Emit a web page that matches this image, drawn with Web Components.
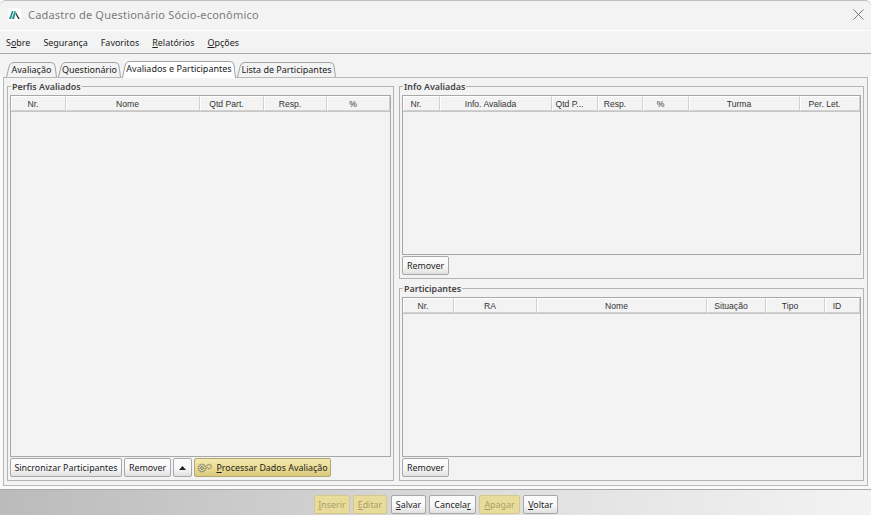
<!DOCTYPE html>
<html lang="pt">
<head>
<meta charset="utf-8">
<title>Cadastro de Questionário Sócio-econômico</title>
<style>
  html, body { margin: 0; height: 100%; overflow: hidden; background: #fafafa; }
  body { font-family: "Noto Sans", "Liberation Sans", sans-serif; color: #222; display: flex; flex-direction: column; }
  u { text-underline-offset: 1px; }
</style>
</head>
<body>
  <title-bar text="Cadastro de Questionário Sócio-econômico"></title-bar>
  <menu-bar>
    <menu-item><span>S<u>o</u>bre</span></menu-item>
    <menu-item>Segurança</menu-item>
    <menu-item>Favoritos</menu-item>
    <menu-item><span><u>R</u>elatórios</span></menu-item>
    <menu-item><span><u>O</u>pções</span></menu-item>
  </menu-bar>
  <tab-strip>
    <tab-item w="51">Avaliação</tab-item>
    <tab-item w="63">Questionário</tab-item>
    <tab-item active w="114">Avaliados e Participantes</tab-item>
    <tab-item w="99">Lista de Participantes</tab-item>
  </tab-strip>
  <main-panel>
    <group-box slot="left" label="Perfis Avaliados" style="flex:1">
      <data-table columns="55:Nr.,134:Nome,64:Qtd Part.,63:Resp.,63:%"></data-table>
      <button-row slot="actions">
        <ui-button style="width:112px">Sincronizar Participantes</ui-button>
        <ui-button style="width:47px">Remover</ui-button>
        <ui-button style="width:19px"><svg width="7" height="4" viewBox="0 0 7 4"><path d="M3.5 0 7 4H0z" fill="#222"/></svg></ui-button>
        <ui-button accent style="width:137px">
          <svg width="16" height="10" viewBox="0 0 16 10" style="margin-right:3px"><g fill="none" stroke="#7d7d70"><circle cx="5" cy="5" r="3.6" stroke-width="1.6" stroke-dasharray="1.2 .8"/><circle cx="5" cy="5" r="1.4"/><circle cx="12" cy="3.5" r="2.2" stroke-width="1.2" stroke-dasharray="1 .6"/></g></svg>
          <span><u>P</u>rocessar Dados Avaliação</span>
        </ui-button>
      </button-row>
    </group-box>
    <div slot="right" style="display:flex;flex-direction:column;gap:4px;height:100%">
      <group-box label="Info Avaliadas" style="height:198px">
        <data-table columns="37:Nr.,112:Info. Avaliada,46:Qtd P...,45:Resp.,46:%,111:Turma,60:Per. Let."></data-table>
        <button-row slot="actions"><ui-button style="width:47px">Remover</ui-button></button-row>
      </group-box>
      <group-box label="Participantes" style="flex:1">
        <data-table columns="51:Nr.,83:RA,170:Nome,59:Situação,59:Tipo,35:ID"></data-table>
        <button-row slot="actions"><ui-button style="width:47px">Remover</ui-button></button-row>
      </group-box>
    </div>
  </main-panel>
  <foot-bar>
    <ui-button disabled style="width:36px"><span><u>I</u>nserir</span></ui-button>
    <ui-button disabled style="width:34px;margin-left:3px"><span><u>E</u>ditar</span></ui-button>
    <ui-button style="width:35px;margin-left:4px"><span><u>S</u>alvar</span></ui-button>
    <ui-button style="width:47px;margin-left:3px"><span>Cancela<u>r</u></span></ui-button>
    <ui-button disabled style="width:41px;margin-left:3px"><span><u>A</u>pagar</span></ui-button>
    <ui-button style="width:35px;margin-left:3px"><span><u>V</u>oltar</span></ui-button>
  </foot-bar>

<script>
function shadow(el, html) {
  el.attachShadow({ mode: "open" }).innerHTML = html;
}

class TitleBar extends HTMLElement {
  connectedCallback() {
    shadow(this, `
      <style>
        :host { display: flex; align-items: center; height: 31px; padding: 0 0 2px 8px; box-sizing: border-box; background: #f3f3f3;
                border-top: 1px solid #bdbdbd; border-bottom: 1px solid #fff; border-radius: 6px 6px 0 0; flex: none; }
        .logo { width: 13px; height: 13px; background: #fff; flex: none; }
        span { margin-left: 7px; font-size: 11px; color: #7b7b7b; letter-spacing: .2px; flex: 1; }
        .close { margin-right: 7px; }
      </style>
      <svg class="logo" viewBox="0 0 13 13"><path d="M1 11 4 3h1.6L3 11zM3.8 11l2.8-8h1.2l-1.6 8z" fill="#1b8f8a"/><path d="M8 4.5 11.8 11h-1.5L7.4 6z" fill="#333"/></svg>
      <span>${this.getAttribute("text")}</span>
      <svg class="close" width="11" height="11" viewBox="0 0 11 11"><path d="M.5.5l10 10M10.5.5l-10 10" stroke="#777" fill="none"/></svg>`);
  }
}

class MenuBar extends HTMLElement {
  connectedCallback() {
    shadow(this, `
      <style>
        :host { display: flex; gap: 13px; align-items: center; height: 23px; padding: 0 0 0 6px; box-sizing: border-box; background: #f3f3f3;
                border-bottom: 1px solid #a9a9a9; flex: none; }
      </style>
      <slot></slot>`);
  }
}

class MenuItem extends HTMLElement {
  connectedCallback() {
    shadow(this, `
      <style>:host { display: block; font-size: 8.95px; color: #222; white-space: nowrap; }</style>
      <slot></slot>`);
  }
}

class TabStrip extends HTMLElement {
  connectedCallback() {
    shadow(this, `
      <style>
        :host { display: flex; align-items: flex-end; height: 23px; padding-left: 6px; box-sizing: border-box; flex: none; background: #f3f3f3; position: relative; z-index: 1; }
      </style>
      <slot></slot>`);
  }
}

class TabItem extends HTMLElement {
  connectedCallback() {
    const active = this.hasAttribute("active");
    const w = Number(this.getAttribute("w"));
    const h = active ? 17 : 15;
    const edge = `M.5 ${h}L3 5Q4 .5 8 .5L${w - 6} .5Q${w - 2.5} .5 ${w - 2} 4L${w - .5} ${h}`;
    shadow(this, `
      <style>
        :host { display: flex; align-items: center; justify-content: center; position: relative; width: ${w}px; height: ${h}px; margin-right: 1px;
                padding: 0 0 ${active ? 2 : 0}px 0; box-sizing: border-box; flex: none; margin-bottom: ${active ? -1 : 0}px;
                font-size: 9px; color: #222; white-space: nowrap; }
        svg { position: absolute; left: 0; top: 0; }
        span { position: relative; }
      </style>
      <svg width="${w}" height="${h}" viewBox="0 0 ${w} ${h}"><path d="${edge}" fill="${active ? "#fff" : "#f3f3f3"}" stroke="#a3a3a3"/></svg>
      <span><slot></slot></span>`);
  }
}

class MainPanel extends HTMLElement {
  connectedCallback() {
    shadow(this, `
      <style>
        :host { display: flex; gap: 5px; height: 409px; margin: 0 3px 0 3px; padding: 3px 3px 4px 3px; box-sizing: border-box; flex: none;
                border: 1px solid #b8b8b8; background: #f3f3f3; }
        .left { width: 387px; flex: none; display: flex; }
        .right { flex: 1; min-width: 0; }
      </style>
      <div class="left"><slot name="left"></slot></div>
      <div class="right"><slot name="right"></slot></div>`);
  }
}

class GroupBox extends HTMLElement {
  connectedCallback() {
    shadow(this, `
      <style>
        :host { display: flex; min-width: 0; box-sizing: border-box; }
        fieldset { flex: 1; min-width: 0; margin: 0; padding: 2px 2px 3px; border: 1px solid #b4b4b4; display: flex; flex-direction: column; box-sizing: border-box; }
        legend { padding: 0 1px; margin-left: 1px; font-size: 8.9px; font-weight: 600; color: #444; line-height: 11px; }
        .body { flex: 1; min-height: 0; display: flex; }
        .body ::slotted(*) { flex: 1; }
      </style>
      <fieldset>
        <legend>${this.getAttribute("label")}</legend>
        <div class="body"><slot></slot></div>
        <slot name="actions"></slot>
      </fieldset>`);
  }
}

class DataTable extends HTMLElement {
  connectedCallback() {
    const cols = this.getAttribute("columns").split(",").map(c => c.split(":"));
    const cells = cols.map(c => `<div class="th" style="width:${c[0]}px">${c[1]}</div>`).join("");
    shadow(this, `
      <style>
        :host { display: block; min-width: 0; box-sizing: border-box; border: 1px solid #a8a8a8; background: #f3f3f3; margin-top: 1px; }
        .head { display: flex; height: 15px; border-bottom: 1px solid #c6c6c6; }
        .th { box-sizing: border-box; flex: none; display: flex; align-items: center; justify-content: center; padding-right: 11px;
              border: 1px solid #d0d0d0; border-left-color: #fff; border-top-color: #fff;
              font: 8.6px "Liberation Sans", sans-serif; color: #333; white-space: nowrap; }
      </style>
      <div class="head">${cells}</div>`);
  }
}

class ButtonRow extends HTMLElement {
  connectedCallback() {
    shadow(this, `
      <style>:host { display: flex; gap: 2px; height: 19px; margin-top: 1px; flex: none; }</style>
      <slot></slot>`);
  }
}

class UiButton extends HTMLElement {
  connectedCallback() {
    shadow(this, `
      <style>
        :host { display: inline-flex; align-items: center; justify-content: center; box-sizing: border-box; height: 19px; flex: none;
                border: 1px solid #a8a8a8; border-radius: 2px; background: linear-gradient(#fbfbfb, #f8f8f8 55%, #e0e0e0);
                font-size: 8.9px; color: #222; white-space: nowrap; }
        :host([accent]) { background: linear-gradient(#f3e8ae, #e9da90 60%, #d9c87c); border-color: #b3a773; }
        :host([disabled]) { background: #e9dc9a; border-color: #d3c98a; color: #a89e6c; }
      </style>
      <slot></slot>`);
  }
}

class FootBar extends HTMLElement {
  connectedCallback() {
    shadow(this, `
      <style>
        :host { display: flex; align-items: flex-end; flex: 1; min-height: 0; padding: 0 0 1px 314px; box-sizing: border-box; margin-top: 3px;
                border-top: 1px solid #a9a9a9; background: linear-gradient(90deg, #bbb, #cfcfcf 35%, #e2e2e2 64%, #f3f3f3); }
      </style>
      <slot></slot>`);
  }
}

customElements.define("title-bar", TitleBar);
customElements.define("menu-bar", MenuBar);
customElements.define("menu-item", MenuItem);
customElements.define("tab-strip", TabStrip);
customElements.define("tab-item", TabItem);
customElements.define("main-panel", MainPanel);
customElements.define("group-box", GroupBox);
customElements.define("data-table", DataTable);
customElements.define("button-row", ButtonRow);
customElements.define("ui-button", UiButton);
customElements.define("foot-bar", FootBar);
</script>
</body>
</html>
